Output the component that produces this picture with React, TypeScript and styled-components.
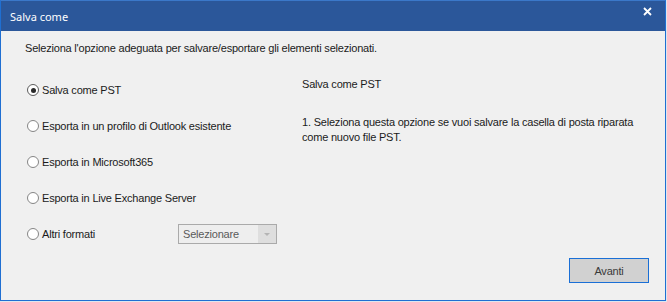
import styled, { createGlobalStyle } from 'styled-components'

const GlobalStyle = createGlobalStyle`
  html, body {
    margin: 0;
    padding: 0;
    background: #dfe6ee;
  }
  * {
    box-sizing: border-box;
  }
`

const Window = styled.div`
  width: 666px;
  height: 301px;
  border: 1px solid #1f6fd2;
  border-top-color: #3b78c9;
  background: #f0f0f0;
  display: flex;
  flex-direction: column;
  font-family: 'Liberation Sans', Arial, sans-serif;
  font-size: 11px;
  letter-spacing: -0.2px;
  color: #1b1b1b;
`

const TitleBar = styled.div`
  height: 30px;
  flex: none;
  background: #2b579a;
  display: flex;
  align-items: center;
  justify-content: space-between;
  padding: 0 13px 0 9px;
  color: #ffffff;
  font-family: 'Noto Sans', 'Open Sans', sans-serif;
  font-size: 11px;
  letter-spacing: 0;
`

const CloseButton = styled.button`
  border: none;
  background: none;
  padding: 0;
  margin-top: -9px;
  display: flex;
  cursor: pointer;
`

const Body = styled.div`
  flex: 1;
  display: flex;
  flex-direction: column;
  padding: 10px 16px 17px 24px;
`

const Intro = styled.p`
  margin: 0;
  line-height: 14px;
`

const Content = styled.div`
  display: grid;
  grid-template-columns: 277px 1fr;
  margin-top: 22px;
  flex: 1;
`

const OptionList = styled.div`
  display: flex;
  flex-direction: column;
  gap: 16px;
  padding-top: 3px;
`

const OptionRow = styled.label`
  display: flex;
  align-items: center;
  height: 20px;
  line-height: 14px;
`

const RadioDot = styled.span<{ $checked?: boolean }>`
  width: 12px;
  height: 12px;
  border-radius: 50%;
  border: 1px solid ${(p) => (p.$checked ? '#5c5c5c' : '#858585')};
  background: #ffffff;
  margin: 0 3px 0 2px;
  flex: none;
  display: flex;
  align-items: center;
  justify-content: center;

  &::after {
    content: '';
    width: 5px;
    height: 5px;
    border-radius: 50%;
    background: ${(p) => (p.$checked ? '#2a2a2a' : 'transparent')};
  }
`

const OptionLabel = styled.span<{ $width?: number }>`
  width: ${(p) => (p.$width ? `${p.$width}px` : 'auto')};
  flex: none;
`

const Select = styled.div`
  width: 99px;
  height: 20px;
  border: 1px solid #aaaaaa;
  background: #eeeeee;
  display: flex;
  align-items: stretch;
  color: #5a5a5a;
`

const SelectText = styled.span`
  flex: 1;
  display: flex;
  align-items: center;
  padding-left: 4px;
`

const SelectArrow = styled.span`
  width: 18px;
  background: #dedede;
  display: flex;
  align-items: center;
  justify-content: center;

  &::after {
    content: '';
    border-left: 3px solid transparent;
    border-right: 3px solid transparent;
    border-top: 3px solid #b4b4b4;
  }
`

const Details = styled.div`
  line-height: 15px;
`

const DetailsTitle = styled.div`
  line-height: 14px;
  margin-bottom: 24px;
`

const Footer = styled.div`
  display: flex;
  justify-content: flex-end;
`

const Button = styled.button`
  width: 80px;
  height: 25px;
  border: 1px solid #1a6fd6;
  background: #d1d1d1;
  color: #3a3a3a;
  font-family: 'Liberation Sans', Arial, sans-serif;
  font-size: 11px;
  letter-spacing: -0.2px;
  padding: 0;
`

const options = [
  'Salva come PST',
  'Esporta in un profilo di Outlook esistente',
  'Esporta in Microsoft365',
  'Esporta in Live Exchange Server',
]

export default function App() {
  return (
    <>
      <GlobalStyle />
      <Window>
        <TitleBar>
          <span>Salva come</span>
          <CloseButton aria-label="Chiudi">
            <svg width="9" height="9" viewBox="0 0 9 9">
              <path d="M1 1 L8 8 M8 1 L1 8" stroke="#ffffff" strokeWidth="1.8" />
            </svg>
          </CloseButton>
        </TitleBar>
        <Body>
          <Intro>Seleziona l'opzione adeguata per salvare/esportare gli elementi selezionati.</Intro>
          <Content>
            <OptionList>
              {options.map((o, i) => (
                <OptionRow key={o}>
                  <RadioDot $checked={i === 0} />
                  <OptionLabel>{o}</OptionLabel>
                </OptionRow>
              ))}
              <OptionRow>
                <RadioDot />
                <OptionLabel $width={136}>Altri formati</OptionLabel>
                <Select>
                  <SelectText>Selezionare</SelectText>
                  <SelectArrow />
                </Select>
              </OptionRow>
            </OptionList>
            <Details>
              <DetailsTitle>Salva come PST</DetailsTitle>
              <div>
                1. Seleziona questa opzione se vuoi salvare la casella di posta riparata
                <br />
                come nuovo file PST.
              </div>
            </Details>
          </Content>
          <Footer>
            <Button>Avanti</Button>
          </Footer>
        </Body>
      </Window>
    </>
  )
}
